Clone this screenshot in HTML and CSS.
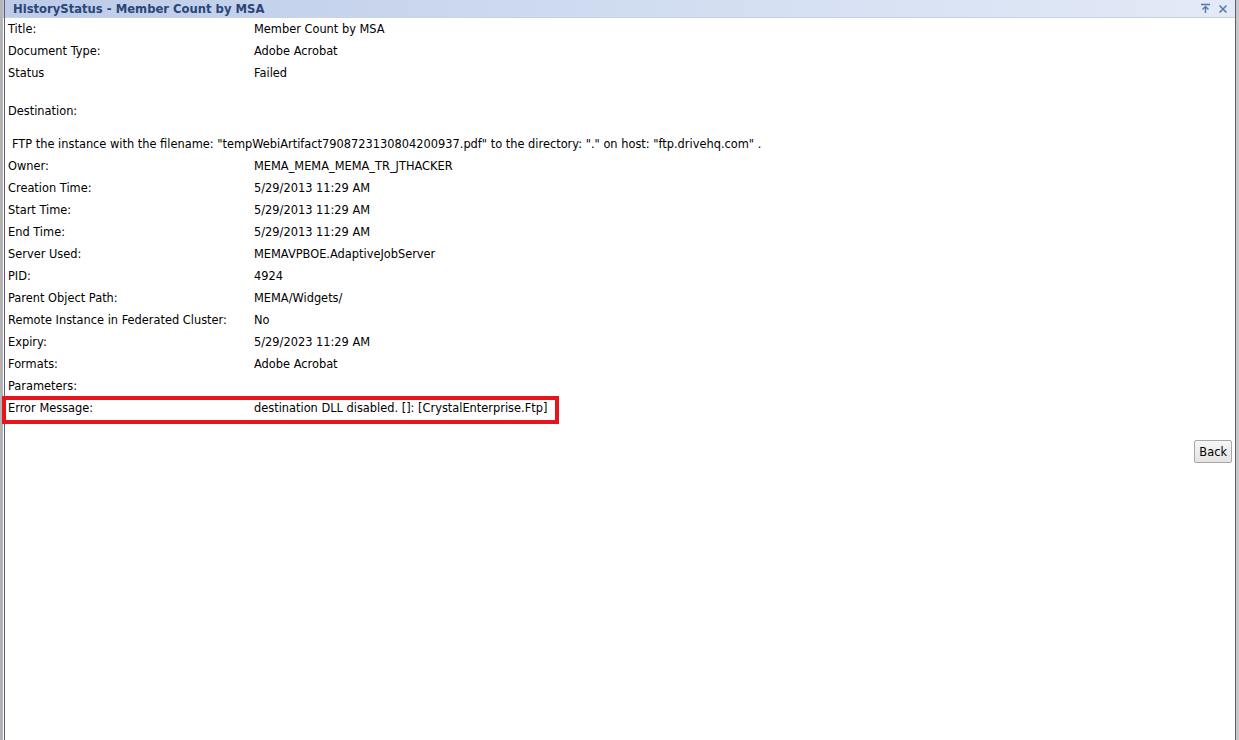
FILE: index.html
```html
<!DOCTYPE html>
<html lang="en">
<head>
    <meta charset="UTF-8">
    <title>HistoryStatus - Member Count by MSA</title>
    <link rel="stylesheet" href="styles.css">
</head>
<body>
    <div class="window">
        <div class="titlebar">
            <span class="title">HistoryStatus - Member Count by MSA</span>
            <span class="tools">
                <svg width="11" height="11" viewBox="0 0 11 11"><path d="M1 1.5h9M5.5 10V3.5M2.5 6.5l3-3 3 3" fill="none" stroke="#5a76a8" stroke-width="1.4"/></svg>
                <svg width="10" height="10" viewBox="0 0 10 10"><path d="M1.5 1.5l7 7M8.5 1.5l-7 7" fill="none" stroke="#5a76a8" stroke-width="1.5"/></svg>
            </span>
        </div>

        <div class="content">
            <div class="row"><div class="label">Title:</div><div class="value">Member Count by MSA</div></div>
            <div class="row"><div class="label">Document Type:</div><div class="value">Adobe Acrobat</div></div>
            <div class="row"><div class="label">Status</div><div class="value">Failed</div></div>

            <div class="row dest"><div class="label">Destination:</div></div>
            <div class="row ftp">FTP the instance with the filename: "tempWebiArtifact7908723130804200937.pdf" to the directory: "." on host: "ftp.drivehq.com" .</div>

            <div class="row"><div class="label">Owner:</div><div class="value">MEMA_MEMA_MEMA_TR_JTHACKER</div></div>
            <div class="row"><div class="label">Creation Time:</div><div class="value">5/29/2013 11:29 AM</div></div>
            <div class="row"><div class="label">Start Time:</div><div class="value">5/29/2013 11:29 AM</div></div>
            <div class="row"><div class="label">End Time:</div><div class="value">5/29/2013 11:29 AM</div></div>
            <div class="row"><div class="label">Server Used:</div><div class="value">MEMAVPBOE.AdaptiveJobServer</div></div>
            <div class="row"><div class="label">PID:</div><div class="value">4924</div></div>
            <div class="row"><div class="label">Parent Object Path:</div><div class="value">MEMA/Widgets/</div></div>
            <div class="row"><div class="label">Remote Instance in Federated Cluster:</div><div class="value">No</div></div>
            <div class="row"><div class="label">Expiry:</div><div class="value">5/29/2023 11:29 AM</div></div>
            <div class="row"><div class="label">Formats:</div><div class="value">Adobe Acrobat</div></div>
            <div class="row"><div class="label">Parameters:</div></div>
            <div class="row error">
                <div class="label">Error Message:</div><div class="value">destination DLL disabled. []: [CrystalEnterprise.Ftp]</div>
                <div class="highlight"></div>
            </div>

            <div class="actions">
                <button class="btn">Back</button>
            </div>
        </div>
    </div>
</body>
</html>
```

FILE: styles.css
```css
html, body {
    margin: 0;
    padding: 0;
    height: 100%;
    background: #fff;
}

body {
    font-family: "DejaVu Sans", Verdana, sans-serif;
    font-size: 11.4px;
    color: #000;
}

.window {
    height: 740px;
    box-sizing: border-box;
    border-left: 3px solid #b4b4b4;
    border-right: 3px solid #c8c8c8;
    position: relative;
}

.window::before {
    content: "";
    position: absolute;
    top: 0;
    bottom: 0;
    left: 1px;
    width: 1px;
    background: #5c5c78;
}

.window::after {
    content: "";
    position: absolute;
    top: 0;
    bottom: 0;
    right: 0;
    width: 1px;
    background: #5c5c78;
}

.titlebar {
    height: 17px;
    display: flex;
    align-items: center;
    justify-content: space-between;
    padding: 0 8px 0 10px;
    background: linear-gradient(to right, #bccbe8, #d4dff2 60%, #e3eaf7);
    border-bottom: 1px solid #c6d2e8;
}

.title {
    font-weight: bold;
    font-size: 11.6px;
    color: #2a4677;
}

.tools {
    display: flex;
    align-items: center;
    gap: 7px;
}

.content {
    padding: 0 0 0 5px;
}

.row {
    display: flex;
    height: 22px;
    align-items: center;
    position: relative;
}

.label {
    width: 246px;
    flex-shrink: 0;
}

.dest {
    margin-top: 16px;
}

.ftp {
    margin-top: 11px;
    padding-left: 4px;
}

.highlight {
    position: absolute;
    left: -6px;
    top: -1px;
    width: 549px;
    height: 20px;
    border: 4px solid #e8141c;
}

.actions {
    display: flex;
    justify-content: flex-end;
    padding: 21px 4px 0 0;
}

.btn {
    font-family: "DejaVu Sans", Verdana, sans-serif;
    font-size: 11.4px;
    height: 23px;
    padding: 0 4px;
    background: linear-gradient(#f6f6f6, #e4e4e4);
    border: 1px solid #a8a8a8;
    border-radius: 2px;
    color: #000;
}
```
